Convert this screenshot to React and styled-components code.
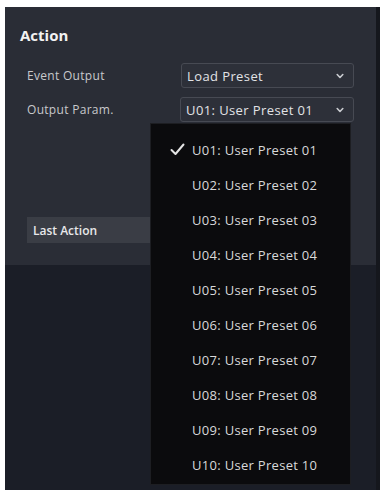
import React from 'react';
import styled, { createGlobalStyle } from 'styled-components';

const GlobalStyle = createGlobalStyle`
  html, body {
    margin: 0;
    padding: 0;
    background: #ffffff;
  }
  body {
    font-family: "Open Sans", Lato, sans-serif;
  }
`;

const presets = Array.from({ length: 10 }, (_, i) => {
  const n = String(i + 1).padStart(2, '0');
  return `U${n}: User Preset ${n}`;
});

function Chevron() {
  return (
    <svg width="8" height="6" viewBox="0 0 8 6">
      <path d="M1.2 1.5 L4 4.5 L6.8 1.5" fill="none" stroke="#c9cbd0" strokeWidth="1.6" strokeLinecap="round" strokeLinejoin="round" />
    </svg>
  );
}

function Check() {
  return (
    <svg width="15" height="13" viewBox="0 0 15 13">
      <path d="M1.5 7 L5.5 11 L13.5 1.5" fill="none" stroke="#e4e4e4" strokeWidth="2" strokeLinecap="round" strokeLinejoin="round" />
    </svg>
  );
}

export default function App() {
  return (
    <Page>
      <GlobalStyle />
      <Panel>
        <TopSection>
          <Title>Action</Title>
          <Row>
            <Label>Event Output</Label>
            <Select>
              <span>Load Preset</span>
              <Chevron />
            </Select>
          </Row>
          <Row>
            <Label>Output Param.</Label>
            <SelectWrap>
              <Select>
                <span>U01: User Preset 01</span>
                <Chevron />
              </Select>
              <Menu>
                {presets.map((p, i) => (
                  <MenuItem key={p}>
                    <CheckSlot>{i === 0 && <Check />}</CheckSlot>
                    {p}
                  </MenuItem>
                ))}
              </Menu>
            </SelectWrap>
          </Row>
          <LastAction>Last Action</LastAction>
        </TopSection>
        <BottomSection />
      </Panel>
    </Page>
  );
}

const Page = styled.div`
  width: 385px;
  height: 490px;
  padding: 7px 5px 0 5px;
  box-sizing: border-box;
  overflow: hidden;
`;

const Panel = styled.div`
  width: 375px;
  height: 483px;
  display: flex;
  flex-direction: column;
  background: #1b1e27;
  border-right: 4px solid #15171d;
  box-sizing: border-box;
`;

const TopSection = styled.div`
  height: 258px;
  background: #2a2d36;
  padding: 18px 22px 0 22px;
  box-sizing: border-box;
  display: flex;
  flex-direction: column;
`;

const Title = styled.div`
  color: #f2f2f2;
  font-size: 15px;
  font-weight: 700;
  margin-left: -7px;
  height: 20px;
  line-height: 20px;
  margin-bottom: 18px;
`;

const Row = styled.div`
  display: flex;
  align-items: center;
  margin-bottom: 9px;
`;

const Label = styled.div`
  width: 155px;
  color: #c8c9cc;
  font-size: 12px;
  letter-spacing: 0.3px;
`;

const SelectWrap = styled.div`
  position: relative;
`;

const Select = styled.div`
  width: 174px;
  height: 25px;
  box-sizing: border-box;
  border: 1px solid #474a53;
  border-radius: 3px;
  background: #2d3039;
  display: flex;
  align-items: center;
  justify-content: space-between;
  padding: 0 9px 0 5px;
  color: #e2e3e6;
  font-size: 13px;
  letter-spacing: 0.4px;
`;

const Menu = styled.div`
  position: absolute;
  top: 26px;
  left: -30px;
  width: 201px;
  height: 362px;
  box-sizing: border-box;
  background: #0b0b0d;
  border: 1px solid #1d1e22;
  padding-top: 8px;
  z-index: 2;
`;

const MenuItem = styled.div`
  height: 35px;
  display: flex;
  align-items: center;
  color: #d9d9da;
  font-size: 13px;
  letter-spacing: 0.3px;
`;

const CheckSlot = styled.span`
  width: 41px;
  display: flex;
  justify-content: flex-end;
  padding-right: 7px;
  box-sizing: border-box;
`;

const LastAction = styled.div`
  margin-top: 86px;
  height: 26px;
  width: 320px;
  background: #3a3d45;
  color: #e8e8ea;
  font-size: 12px;
  font-weight: 600;
  display: flex;
  align-items: center;
  padding-left: 6px;
  box-sizing: border-box;
`;

const BottomSection = styled.div`
  flex: 1;
  background: #1b1e27;
`;
